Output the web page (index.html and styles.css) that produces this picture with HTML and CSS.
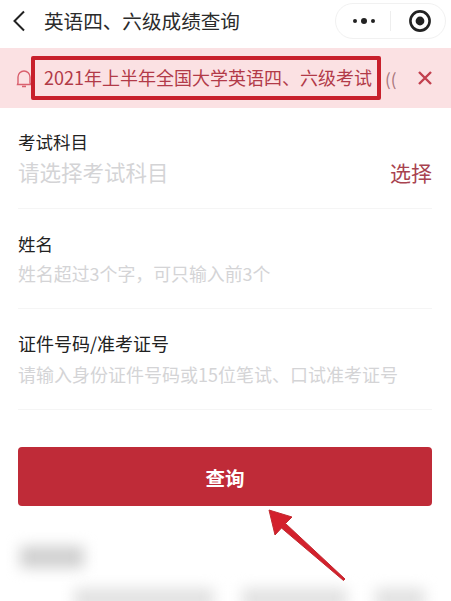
FILE: index.html
```html
<!DOCTYPE html>
<html lang="zh-CN">
<head>
  <meta charset="UTF-8">
  <meta name="viewport" content="width=device-width, initial-scale=1.0">
  <title>英语四、六级成绩查询</title>
  <link rel="stylesheet" href="styles.css">
</head>
<body>
  <div class="page">
    <!-- Title bar -->
    <header class="title-bar">
      <svg class="back-icon" width="16" height="24" viewBox="0 0 16 24"><path d="M13 2.5 3.5 12 13 21.5" fill="none" stroke="#222" stroke-width="2"/></svg>
      <h1 class="page-title">英语四、六级成绩查询</h1>
      <div class="capsule">
        <svg class="capsule-dots" width="24" height="8" viewBox="0 0 24 8"><circle cx="3" cy="4" r="2" fill="#222"/><circle cx="12" cy="4" r="3" fill="#222"/><circle cx="21" cy="4" r="2" fill="#222"/></svg>
        <span class="capsule-line"></span>
        <svg class="capsule-target" width="24" height="24" viewBox="0 0 24 24"><circle cx="12" cy="12" r="9.6" fill="none" stroke="#222" stroke-width="2.6"/><circle cx="12" cy="12" r="4.4" fill="#222"/></svg>
      </div>
    </header>

    <!-- Notice bar -->
    <div class="notice">
      <svg class="bell" width="16" height="20" viewBox="0 0 16 20"><path d="M2 15V9a6 6 0 0 1 12 0v6l1.500 1.500h-14zM6 18.500h4" fill="none" stroke="#d9606e" stroke-width="1.400"/></svg>
      <div class="notice-box">2021年上半年全国大学英语四、六级考试</div>
      <div class="notice-more">((</div>
      <svg class="notice-close" width="16" height="16" viewBox="0 0 16 16"><path d="M2 2 14 14M14 2 2 14" stroke="#c2404f" stroke-width="2.400"/></svg>
    </div>

    <!-- Query form -->
    <form class="form">
      <div class="field field-subject">
        <div class="field-label">考试科目</div>
        <div class="field-row">
          <span class="hint hint-large">请选择考试科目</span>
          <span class="pick">选择</span>
        </div>
      </div>
      <div class="field field-name">
        <div class="field-label">姓名</div>
        <div class="hint hint-small">姓名超过3个字，可只输入前3个</div>
      </div>
      <div class="field field-id">
        <div class="field-label field-label-wide">证件号码/准考证号</div>
        <div class="hint hint-id">请输入身份证件号码或15位笔试、口试准考证号</div>
      </div>
      <button type="button" class="query-btn">查询</button>
    </form>

    <!-- Blurred footer content -->
    <div class="blur-title"></div>
    <div class="blur-lines">
      <span class="blur-line blur-a"></span>
      <span class="blur-line blur-b"></span>
      <span class="blur-line blur-c"></span>
    </div>

    <!-- Annotation arrow -->
    <svg class="arrow" width="90" height="80" viewBox="0 0 90 80">
      <path d="M3 2 26 9 19.500 15.500 79 71 77.500 72.500 15.500 20 9 27z" fill="#d3202c" stroke="#c22a30" stroke-width="1"/>
    </svg>
  </div>
</body>
</html>
```

FILE: styles.css
```css
* {
  margin: 0;
  padding: 0;
  box-sizing: border-box;
}

body {
  background-color: #fff;
  color: #222;
  font-family: "Noto Sans CJK SC", "Liberation Sans", sans-serif;
  overflow: hidden;
}

.page {
  position: relative;
  width: 451px;
  height: 601px;
  overflow: hidden;
}

/* Title bar */
.title-bar {
  display: flex;
  align-items: center;
  height: 48px;
  padding: 0 5px 6px 11px;
}

.back-icon {
  flex: none;
}

.page-title {
  flex: 1;
  margin-left: 17px;
  font-size: 19.600px;
  font-weight: 400;
  line-height: 28px;
  color: #2b2b2b;
}

.capsule {
  display: flex;
  align-items: center;
  width: 111px;
  height: 36px;
  border: 1px solid #f1f1f1;
  border-radius: 18px;
}

.capsule-dots {
  margin-left: 16px;
}

.capsule-line {
  width: 1px;
  height: 20px;
  margin-left: 14px;
  background-color: #eee;
}

.capsule-target {
  margin-left: 17px;
}

/* Notice bar */
.notice {
  display: flex;
  align-items: center;
  height: 60px;
  padding-left: 16px;
  background-color: #fbe1e3;
}

.bell {
  flex: none;
  margin-right: -1px;
}

.notice-box {
  flex: none;
  width: 350px;
  height: 44px;
  padding-left: 9px;
  border: 4px solid #c8202c;
  border-radius: 2px;
  font-size: 18px;
  line-height: 35px;
  color: #b23a48;
  white-space: nowrap;
}

.notice-more {
  flex: none;
  width: 11px;
  margin-left: 4px;
  overflow: hidden;
  font-size: 17px;
  color: #a8757c;
  white-space: nowrap;
}

.notice-close {
  flex: none;
  margin-left: 21px;
}

/* Form */
.form {
  padding: 0 19px 0 18px;
}

.field {
  border-bottom: 1px solid #f5f5f5;
}

.field-subject {
  height: 101px;
  padding-top: 21px;
}

.field-name {
  height: 100px;
  padding-top: 22px;
}

.field-id {
  height: 101px;
  padding-top: 22px;
}

.field-label {
  font-size: 17.500px;
  line-height: 25px;
  color: #222;
}

.field-label-wide {
  font-size: 18px;
}

.field-row {
  display: flex;
  justify-content: space-between;
  align-items: center;
  margin-top: 3px;
}

.hint {
  color: #d4d4d6;
}

.hint-large {
  font-size: 21.500px;
  line-height: 30px;
}

.pick {
  font-size: 21px;
  line-height: 30px;
  color: #a8434f;
}

.hint-small {
  margin-top: 5px;
  font-size: 17.900px;
  line-height: 25px;
}

.hint-id {
  margin-top: 5px;
  font-size: 18px;
  line-height: 26px;
}

.query-btn {
  display: block;
  width: 100%;
  height: 59px;
  margin-top: 37px;
  padding-top: 2px;
  border: 0;
  border-radius: 4px;
  background-color: #bf2b38;
  color: #fff;
  font-family: inherit;
  font-size: 19.500px;
  font-weight: 700;
}

/* Blurred footer */
.blur-title {
  width: 64px;
  height: 22px;
  margin: 40px 0 0 20px;
  background-color: #d0d0d0;
  filter: blur(7px);
}

.blur-lines {
  display: flex;
  gap: 28px;
  margin-top: 20px;
  padding-left: 74px;
}

.blur-line {
  height: 22px;
  background-color: #e2e2e2;
  filter: blur(7px);
}

.blur-a {
  width: 140px;
}

.blur-b {
  width: 105px;
}

.blur-c {
  width: 50px;
}

/* Annotation */
.arrow {
  position: absolute;
  top: 508px;
  left: 266px;
}
```
